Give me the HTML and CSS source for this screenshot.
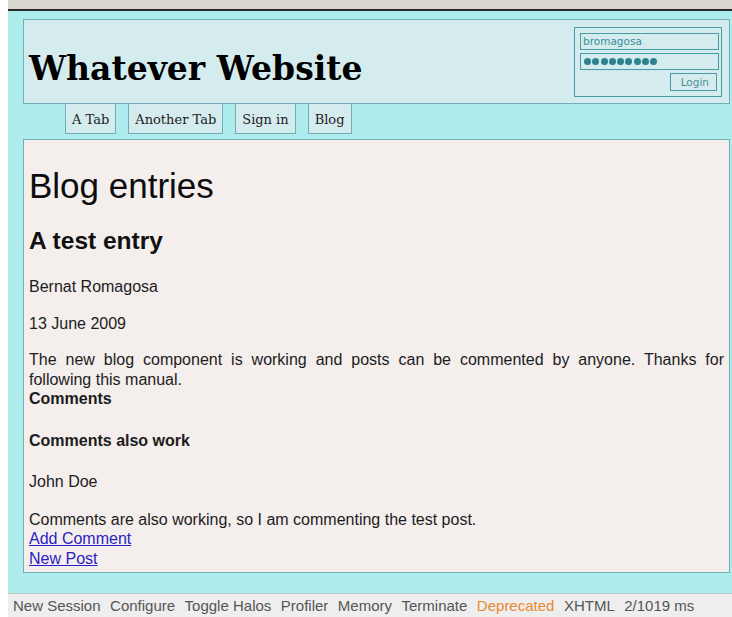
FILE: index.html
```html
<!DOCTYPE html>
<html>
<head>
<meta charset="utf-8">
<title>Whatever Website</title>
<link rel="stylesheet" href="styles.css">
</head>
<body>
<div class="frame">
  <div class="chrome"></div>
  <div class="page">
    <div class="header">
      <h1 class="site-title">Whatever Website</h1>
      <form class="login">
        <div class="field">bromagosa</div>
        <div class="field dots"><i></i><i></i><i></i><i></i><i></i><i></i><i></i><i></i><i></i></div>
        <div class="login-row"><span class="login-btn">Login</span></div>
      </form>
    </div>
    <div class="tabs">
      <a class="tab">A Tab</a>
      <a class="tab">Another Tab</a>
      <a class="tab">Sign in</a>
      <a class="tab">Blog</a>
    </div>
    <div class="content">
      <h1 class="title">Blog entries</h1>
      <h2 class="entry-title">A test entry</h2>
      <p class="meta first">Bernat Romagosa</p>
      <p class="meta">13 June 2009</p>
      <p class="body">The new blog component is working and posts can be commented by anyone. Thanks for following this manual.</p>
      <div class="comments-label">Comments</div>
      <h4 class="comment-title">Comments also work</h4>
      <p class="comment-author">John Doe</p>
      <p class="comment-body">Comments are also working, so I am commenting the test post.</p>
      <a class="action" href="#">Add Comment</a>
      <a class="action" href="#">New Post</a>
    </div>
  </div>
  <div class="toolbar">
    <span>New Session</span>
    <span>Configure</span>
    <span>Toggle Halos</span>
    <span>Profiler</span>
    <span>Memory</span>
    <span>Terminate</span>
    <span class="deprecated">Deprecated</span>
    <span>XHTML</span>
    <span>2/1019 ms</span>
  </div>
</div>
</body>
</html>
```

FILE: styles.css
```css
html, body {
  margin: 0;
  padding: 0;
  background: #ffffff;
  height: 100%;
}

.frame {
  margin-left: 8px;
  height: 617px;
  display: flex;
  flex-direction: column;
  overflow: hidden;
}

.chrome {
  height: 9px;
  background: #dad7d1;
  border-bottom: 2px solid #2a2a2a;
  flex: none;
}

.page {
  background: #aeeced;
  padding: 8px 2px 20px 15px;
  flex: none;
  height: 582px;
  box-sizing: border-box;
  display: flex;
  flex-direction: column;
}

.header {
  flex: none;
  background: #d4ecee;
  border: 1px solid #6fadb7;
  height: 85px;
  box-sizing: border-box;
  display: flex;
  justify-content: space-between;
  align-items: flex-start;
  padding: 0 7px 0 5px;
}

.site-title {
  font-family: "DejaVu Serif", serif;
  font-weight: bold;
  font-size: 33px;
  margin: 30px 0 0 0;
  line-height: 38px;
  color: #000;
}

.login {
  margin: 7px 0 0 0;
  width: 148px;
  height: 70px;
  box-sizing: border-box;
  border: 1px solid #4a9ba7;
  padding: 5px 2px 0 5px;
  display: flex;
  flex-direction: column;
  gap: 3px;
}

.field {
  height: 17px;
  box-sizing: border-box;
  border: 1px solid #4a9ba7;
  font-family: "DejaVu Sans", sans-serif;
  font-size: 10.5px;
  line-height: 15px;
  color: #3b8e9a;
  padding-left: 2px;
}

/* masked password: row of filled circles */
.field.dots {
  display: flex;
  align-items: center;
  gap: 1.3px;
  padding-left: 3px;
}

.field.dots i {
  display: block;
  width: 7px;
  height: 7px;
  border-radius: 50%;
  background: #2d8391;
}

.login-row {
  display: flex;
  justify-content: flex-end;
  padding-right: 2px;
}

.login-btn {
  display: block;
  width: 47px;
  height: 18px;
  box-sizing: border-box;
  border: 1px solid #4a9ba7;
  font-family: "DejaVu Sans", sans-serif;
  font-size: 10.5px;
  line-height: 16px;
  text-align: right;
  padding-right: 7px;
  color: #4f8e97;
}

.tabs {
  display: flex;
  gap: 12px;
  padding-left: 42px;
  height: 30px;
  flex: none;
}

.tab {
  display: block;
  box-sizing: border-box;
  height: 30px;
  border: 1px solid #6fadb7;
  border-top: none;
  background: #d4ecee;
  font-family: "DejaVu Serif", serif;
  font-size: 13px;
  line-height: 31px;
  padding: 0 6px;
  color: #222;
}

.content {
  margin-top: 5px;
  background: #f4eeec;
  border: 1px solid #6fadb7;
  flex: 1;
  padding: 0 5px;
  font-family: "Liberation Sans", Arial, sans-serif;
  font-size: 16px;
  line-height: 19.5px;
  color: #1c1c1c;
}

.title {
  font-size: 35px;
  font-weight: normal;
  margin: 26px 0 0 0;
  line-height: 39px;
  color: #0c0c0c;
}

.entry-title {
  font-size: 24.5px;
  font-weight: bold;
  margin: 22px 0 0 0;
  line-height: 28px;
  color: #111;
}

.meta {
  margin: 17px 0 0 0;
}

.meta.first {
  margin-top: 22px;
}

.body {
  margin: 17px 0 0 0;
  text-align: justify;
}

.comments-label {
  font-weight: bold;
}

.comment-title {
  font-size: 16px;
  margin: 22px 0 0 0;
}

.comment-author {
  margin: 22px 0 0 0;
}

.comment-body {
  margin: 18px 0 0 0;
}

.action {
  display: block;
  color: #2a1fc2;
  text-decoration: underline;
}

.toolbar {
  flex: none;
  height: 24px;
  background: #eeeeee;
  border-top: 1px solid #b8c4c4;
  font-family: "Liberation Sans", Arial, sans-serif;
  font-size: 15px;
  line-height: 24px;
  color: #555;
  padding-left: 5px;
  display: flex;
  gap: 9.5px;
}

.deprecated {
  color: #e8892f;
}
```
